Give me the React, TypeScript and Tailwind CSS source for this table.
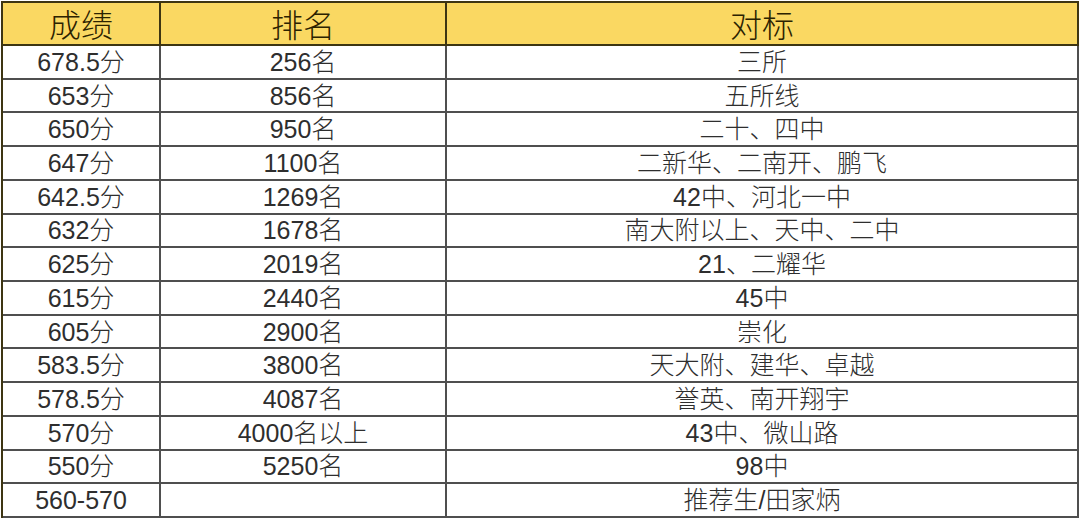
const rows: [string, string, string][] = [
  ["678.5分", "256名", "三所"],
  ["653分", "856名", "五所线"],
  ["650分", "950名", "二十、四中"],
  ["647分", "1100名", "二新华、二南开、鹏飞"],
  ["642.5分", "1269名", "42中、河北一中"],
  ["632分", "1678名", "南大附以上、天中、二中"],
  ["625分", "2019名", "21、二耀华"],
  ["615分", "2440名", "45中"],
  ["605分", "2900名", "崇化"],
  ["583.5分", "3800名", "天大附、建华、卓越"],
  ["578.5分", "4087名", "誉英、南开翔宇"],
  ["570分", "4000名以上", "43中、微山路"],
  ["550分", "5250名", "98中"],
  ["560-570", "", "推荐生/田家炳"],
];

const font = { fontFamily: '"Liberation Sans", "Noto Sans CJK SC", sans-serif' };

export default function App() {
  return (
    <div className="w-[1080px] h-[519px] bg-white pt-[1px] pl-[1px]" style={font}>
      <div className="grid grid-cols-[158px_286px_1fr] grid-rows-[43px_repeat(14,minmax(0,1fr))] w-[1078px] h-[517px] border-t-2 border-l-2 border-[#3d3512]">
        {["成绩", "排名", "对标"].map((h) => (
          <div
            key={h}
            className="flex items-center justify-center pt-[4px] bg-[#fad862] border-r-2 border-b-2 border-[#3d3512] text-[32px] font-light text-[#2b2200] leading-none"
          >
            {h}
          </div>
        ))}
        {rows.map((r, i) =>
          r.map((c, j) => (
            <div
              key={`${i}-${j}`}
              className="flex items-center justify-center pt-[1px] border-r-2 border-b-2 border-[#4f4f4f] text-[25px] font-light text-[#2e2e2e] leading-none"
            >
              {c}
            </div>
          ))
        )}
      </div>
    </div>
  );
}
